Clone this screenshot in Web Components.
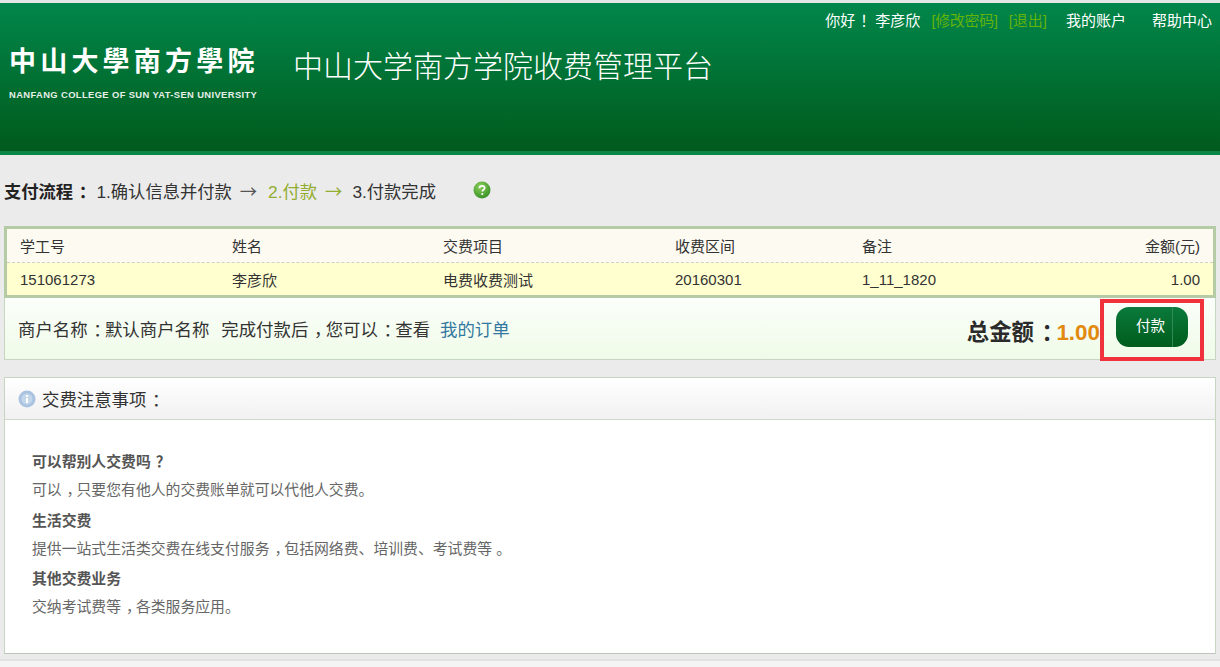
<!DOCTYPE html>
<html lang="zh-CN">
<head>
<meta charset="utf-8">
<title>中山大学南方学院收费管理平台</title>
<style>
    html, body {
        margin: 0;
        height: 667px;
        overflow: hidden;
        background: #ebebeb;
        font-family: "Liberation Sans", "Noto Sans CJK SC", sans-serif;
        color: #333;
    }
</style>
</head>
<body>
<site-header></site-header>
<pay-steps></pay-steps>
<fee-table></fee-table>
<pay-summary></pay-summary>
<notice-panel title-text="交费注意事项">
    <notice-item heading="可以帮别人交费吗<span class='p'>？</span>">可以<i>，</i>只要您有他人的交费账单就可以代他人交费。</notice-item>
    <notice-item heading="生活交费">提供一站式生活类交费在线支付服务<i>，</i>包括网络费、培训费、考试费等 。</notice-item>
    <notice-item heading="其他交费业务">交纳考试费等<i>，</i>各类服务应用。</notice-item>
</notice-panel>
<page-foot></page-foot>

<script>
// punctuation in the reference sits centred in its em box
const punct_css = `.p { padding-left: .33em; letter-spacing: -.33em; }`

class SiteHeader extends HTMLElement {
    constructor() {
        super()
        this.attachShadow({ mode: 'open' }).innerHTML = `
<style>
    ${punct_css}
    :host {
        display: block;
        margin-top: 3px;
        height: 148px;
        border-bottom: 4px solid #0a8748;
        background: linear-gradient(#02864b, #006021 88%, #005a1e);
        color: #fff;
        box-shadow: 0 -3px 0 #e4e8e4;
    }
    .top {
        display: flex;
        justify-content: flex-end;
        gap: 26px;
        padding: 8px 8px 0 0;
        font-size: 15px;
        line-height: 20px;
    }
    .top .who { display: flex; gap: 11px; margin-right: -7px; }
    .top .hi { margin-right: -6px; }
    .top .warn { color: #62b30a; }
    .top .long { letter-spacing: -.35px; }
    .brand {
        display: flex;
        align-items: flex-start;
        padding: 0 0 0 9px;
    }
    .logo { width: 249px; margin-top: 12px; }
    .logo b {
        display: block;
        font: 700 27px/34px "Noto Sans CJK TC", sans-serif;
        letter-spacing: 4.2px;
        white-space: nowrap;
    }
    .logo small {
        display: block;
        margin-top: 12px;
        font: bold 9.4px/12px "Liberation Sans", sans-serif;
        letter-spacing: .38px;
        white-space: nowrap;
        color: #e6efe8;
    }
    h1 {
        margin: 11px 0 0 35px;
        font: 300 30px/44px "Noto Sans CJK SC", sans-serif;
    }
</style>
<div class="top">
    <span class="who"><span class="hi">你好<span class="p">！</span></span><span>李彦欣</span><span class="warn long">[修改密码]</span><span class="warn">[退出]</span></span>
    <span>我的账户</span>
    <span>帮助中心</span>
</div>
<div class="brand">
    <div class="logo"><b lang="zh-Hant">中山大學南方學院</b><small>NANFANG COLLEGE OF SUN YAT-SEN UNIVERSITY</small></div>
    <h1>中山大学南方学院收费管理平台</h1>
</div>`
    }
}

class PaySteps extends HTMLElement {
    constructor() {
        super()
        this.attachShadow({ mode: 'open' }).innerHTML = `
<style>
    ${punct_css}
    :host {
        display: flex;
        align-items: center;
        height: 71px;
        padding-left: 4px;
        font-size: 17.3px;
        color: #333;
    }
    b { margin-right: 6px; color: #222; }
    .arrow { margin: 0 11px 0 8px; font-family: "Noto Sans CJK SC", sans-serif; color: #555; }
    .now { color: #93ad30; }
    .now .arrow { margin: 0 10px 0 8px; color: #93ad30; }
    svg { margin-left: 37px; margin-top: -2px; }
</style>
<b>支付流程<span class="p">：</span></b>
<span>1.确认信息并付款</span><span class="arrow">→</span>
<span class="now">2.付款<span class="arrow">→</span></span>
<span>3.付款完成</span>
<svg width="18" height="18" viewBox="0 0 18 18">
    <defs><radialGradient id="q" cx=".4" cy=".3" r=".8"><stop offset="0" stop-color="#8ccf5a"/><stop offset="1" stop-color="#2f8a22"/></radialGradient></defs>
    <circle cx="9" cy="9" r="8.5" fill="url(#q)"/>
    <path d="M6.4 7.2c0-1.6 1.2-2.4 2.7-2.4s2.6.8 2.6 2.1c0 1.9-2.3 1.8-2.3 3.5" fill="none" stroke="#fff" stroke-width="1.7"/>
    <circle cx="9.3" cy="13" r="1.1" fill="#fff"/>
</svg>`
    }
}

class FeeTable extends HTMLElement {
    constructor() {
        super()
        this.attachShadow({ mode: 'open' }).innerHTML = `
<style>
    :host {
        display: block;
        margin: 0 4px;
        border: 3px solid #b4cba6;
        font-size: 15px;
        color: #333;
    }
    .row {
        display: grid;
        grid-template-columns: 212px 211px 232px 187px 1fr 150px;
        padding: 0 13px;
        align-items: center;
    }
    .head {
        height: 33px;
        background: #fdfaf1;
        border-bottom: 1px dashed #d2cfc4;
    }
    .body { height: 32px; background: #ffffcf; }
    .money { text-align: right; }
</style>
<div class="row head"><span>学工号</span><span>姓名</span><span>交费项目</span><span>收费区间</span><span>备注</span><span class="money">金额(元)</span></div>
<div class="row body"><span>151061273</span><span>李彦欣</span><span>电费收费测试</span><span>20160301</span><span>1_11_1820</span><span class="money">1.00</span></div>`
    }
}

class PaySummary extends HTMLElement {
    constructor() {
        super()
        this.attachShadow({ mode: 'open' }).innerHTML = `
<style>
    ${punct_css}
    :host {
        display: flex;
        align-items: center;
        position: relative;
        height: 61px;
        margin: 0 4px;
        padding: 0 27px 0 13px;
        border: 1px solid #c6d6c0;
        border-top: 0;
        background: linear-gradient(#fbfefa, #effbe8);
        font-size: 17.4px;
        color: #333;
    }
    .shop { margin-right: 12px; }
    a { margin-left: 10px; color: #33799f; text-decoration: none; }
    .total {
        margin-left: auto;
        margin-right: 16px;
        margin-top: 3px;
        font-size: 22.4px;
        font-weight: bold;
        color: #2b2b2b;
    }
    .total em { font-style: normal; color: #e28a10; }
    button {
        position: relative;
        width: 72px;
        height: 40px;
        margin-top: -4px;
        padding: 0 3px 4px 0;
        border: 0;
        border-radius: 13px;
        background: linear-gradient(#0a7a3c, #005c1c);
        color: #fff;
        font: 14.5px "Noto Sans CJK SC", sans-serif;
    }
    button::after {
        content: "";
        position: absolute;
        top: 0;
        bottom: 0;
        right: 15px;
        border-left: 1px solid #2f8a55;
    }
    /* red mark drawn over the pay button */
    .mark {
        position: absolute;
        right: 11px;
        top: 1px;
        width: 96px;
        height: 54px;
        border: 4px solid #f0323c;
    }
</style>
<span class="shop">商户名称<span class="p">：</span>默认商户名称</span>
<span>完成付款后<span class="p">，</span>您可以<span class="p">：</span>查看</span>
<a href="#">我的订单</a>
<span class="total">总金额<span class="p">：</span><em>1.00</em></span>
<button>付款</button>
<div class="mark"></div>`
    }
}

class NoticePanel extends HTMLElement {
    constructor() {
        super()
        this.attachShadow({ mode: 'open' }).innerHTML = `
<style>
    ${punct_css}
    :host {
        display: block;
        margin: 17px 4px 0;
        border: 1px solid #c6d6c0;
        border-bottom-color: #bcc4bc;
        background: #fff;
    }
    .head {
        display: flex;
        align-items: center;
        gap: 6px;
        height: 41px;
        padding-left: 13px;
        background: linear-gradient(#fff, #f1f1f1);
        border-bottom: 1px solid #d0dacc;
        font-size: 17.4px;
        color: #333;
    }
    .body {
        height: 233px;
        box-sizing: border-box;
        padding: 28px 27px 0;
    }
</style>
<div class="head">
    <svg width="18" height="18" viewBox="0 0 18 18">
        <circle cx="9" cy="9" r="8.5" fill="#a9c3e0"/>
        <circle cx="9" cy="9" r="5.5" fill="#c4d6ea"/>
        <rect x="8" y="8" width="2" height="5" fill="#fff"/>
        <rect x="8" y="5" width="2" height="2" fill="#fff"/>
    </svg>
    <div class="title"></div>
</div>
<div class="body"><slot></slot></div>`
        this.shadowRoot.querySelector('.title').innerHTML = this.getAttribute('title-text') + '<span class="p">：</span>'
    }
}

class NoticeItem extends HTMLElement {
    constructor() {
        super()
        this.attachShadow({ mode: 'open' }).innerHTML = `
<style>
    ${punct_css}
    :host {
        display: block;
        height: 58.5px;
        font-size: 14.85px;
        line-height: 28px;
        color: #666;
    }
    h4 { margin: 0; font-size: inherit; color: #555; }
    ::slotted(i) { font-style: normal; padding-left: .33em; letter-spacing: -.33em; }
</style>
<h4></h4>
<slot></slot>`
        this.shadowRoot.querySelector('h4').innerHTML = this.getAttribute('heading')
    }
}

class PageFoot extends HTMLElement {
    constructor() {
        super()
        this.attachShadow({ mode: 'open' }).innerHTML = `
<style>
    :host {
        display: block;
        height: 8px;
        margin-top: 5px;
        border-top: 2px solid #e1e3e1;
        background: #f4f4f4;
    }
</style>`
    }
}

customElements.define('site-header', SiteHeader)
customElements.define('pay-steps', PaySteps)
customElements.define('fee-table', FeeTable)
customElements.define('pay-summary', PaySummary)
customElements.define('notice-panel', NoticePanel)
customElements.define('notice-item', NoticeItem)
customElements.define('page-foot', PageFoot)
</script>
</body>
</html>
